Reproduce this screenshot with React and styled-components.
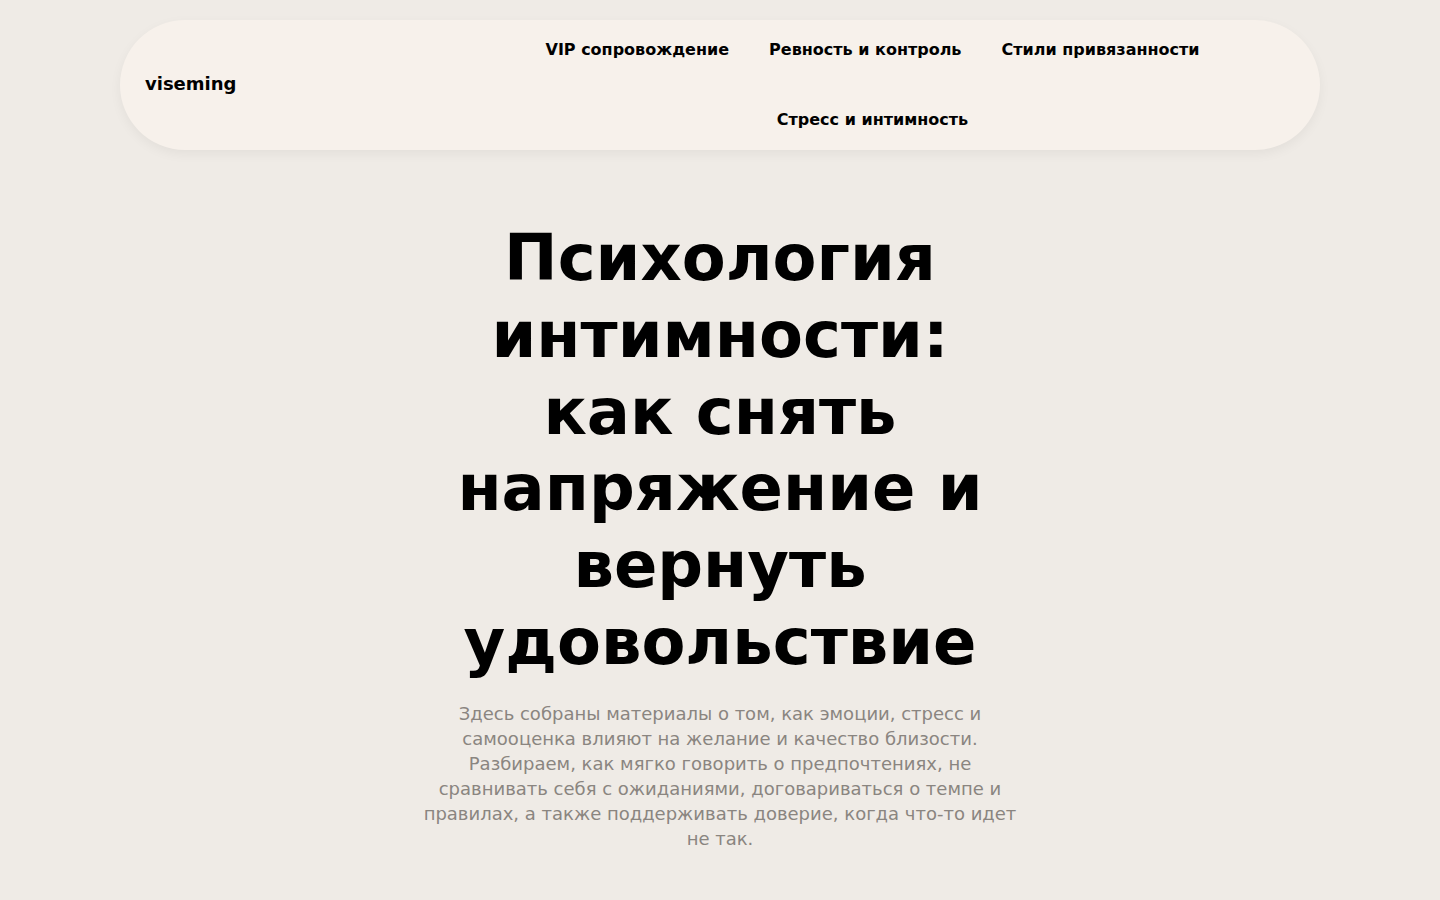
import React from 'react';
import styled, { createGlobalStyle } from 'styled-components';

const GlobalStyle = createGlobalStyle`
  * { box-sizing: border-box; }
  body {
    margin: 0;
    background: #efebe6;
    font-family: 'DejaVu Sans', 'Noto Sans', sans-serif;
    color: #000;
  }
`;

const Page = styled.div`
  min-height: 100vh;
  padding-top: 20px;
`;

const Header = styled.header`
  width: 1200px;
  margin: 0 auto;
  display: flex;
  align-items: center;
  padding: 20px 25px;
  background: #f7f1eb;
  border-radius: 65px;
  box-shadow: 0 4px 12px rgba(0, 0, 0, 0.05);
`;

const Logo = styled.a`
  font-size: 18px;
  font-weight: bold;
  line-height: 20px;
  margin-top: -2px;
  color: #000;
  text-decoration: none;
`;

const Nav = styled.nav`
  width: 845px;
  margin-left: auto;
  display: flex;
  flex-wrap: wrap;
  justify-content: center;
  gap: 50px 40px;
`;

const NavLink = styled.a`
  font-size: 16px;
  font-weight: bold;
  line-height: 20px;
  color: #000;
  text-decoration: none;
`;

const Hero = styled.section`
  width: 600px;
  margin: 0 auto;
  padding-top: 70px;
  text-align: center;
`;

const Title = styled.h1`
  margin: 0;
  font-size: 64px;
  line-height: 1.2;
  font-weight: bold;
`;

const Lead = styled.p`
  margin: 20px 0 0;
  font-size: 18px;
  line-height: 25px;
  color: #8a8580;
`;

const links = [
  'VIP сопровождение',
  'Ревность и контроль',
  'Стили привязанности',
  'Стресс и интимность',
];

export default function App() {
  return (
    <Page>
      <GlobalStyle />
      <Header>
        <Logo href="#">viseming</Logo>
        <Nav>
          {links.map((l) => (
            <NavLink key={l} href="#">{l}</NavLink>
          ))}
        </Nav>
      </Header>
      <Hero>
        <Title>Психология интимности: как снять напряжение и вернуть удовольствие</Title>
        <Lead>
          Здесь собраны материалы о том, как эмоции, стресс и самооценка влияют на желание и
          качество близости. Разбираем, как мягко говорить о предпочтениях, не сравнивать себя с
          ожиданиями, договариваться о темпе и правилах, а также поддерживать доверие, когда
          что-то идет не так.
        </Lead>
      </Hero>
    </Page>
  );
}
